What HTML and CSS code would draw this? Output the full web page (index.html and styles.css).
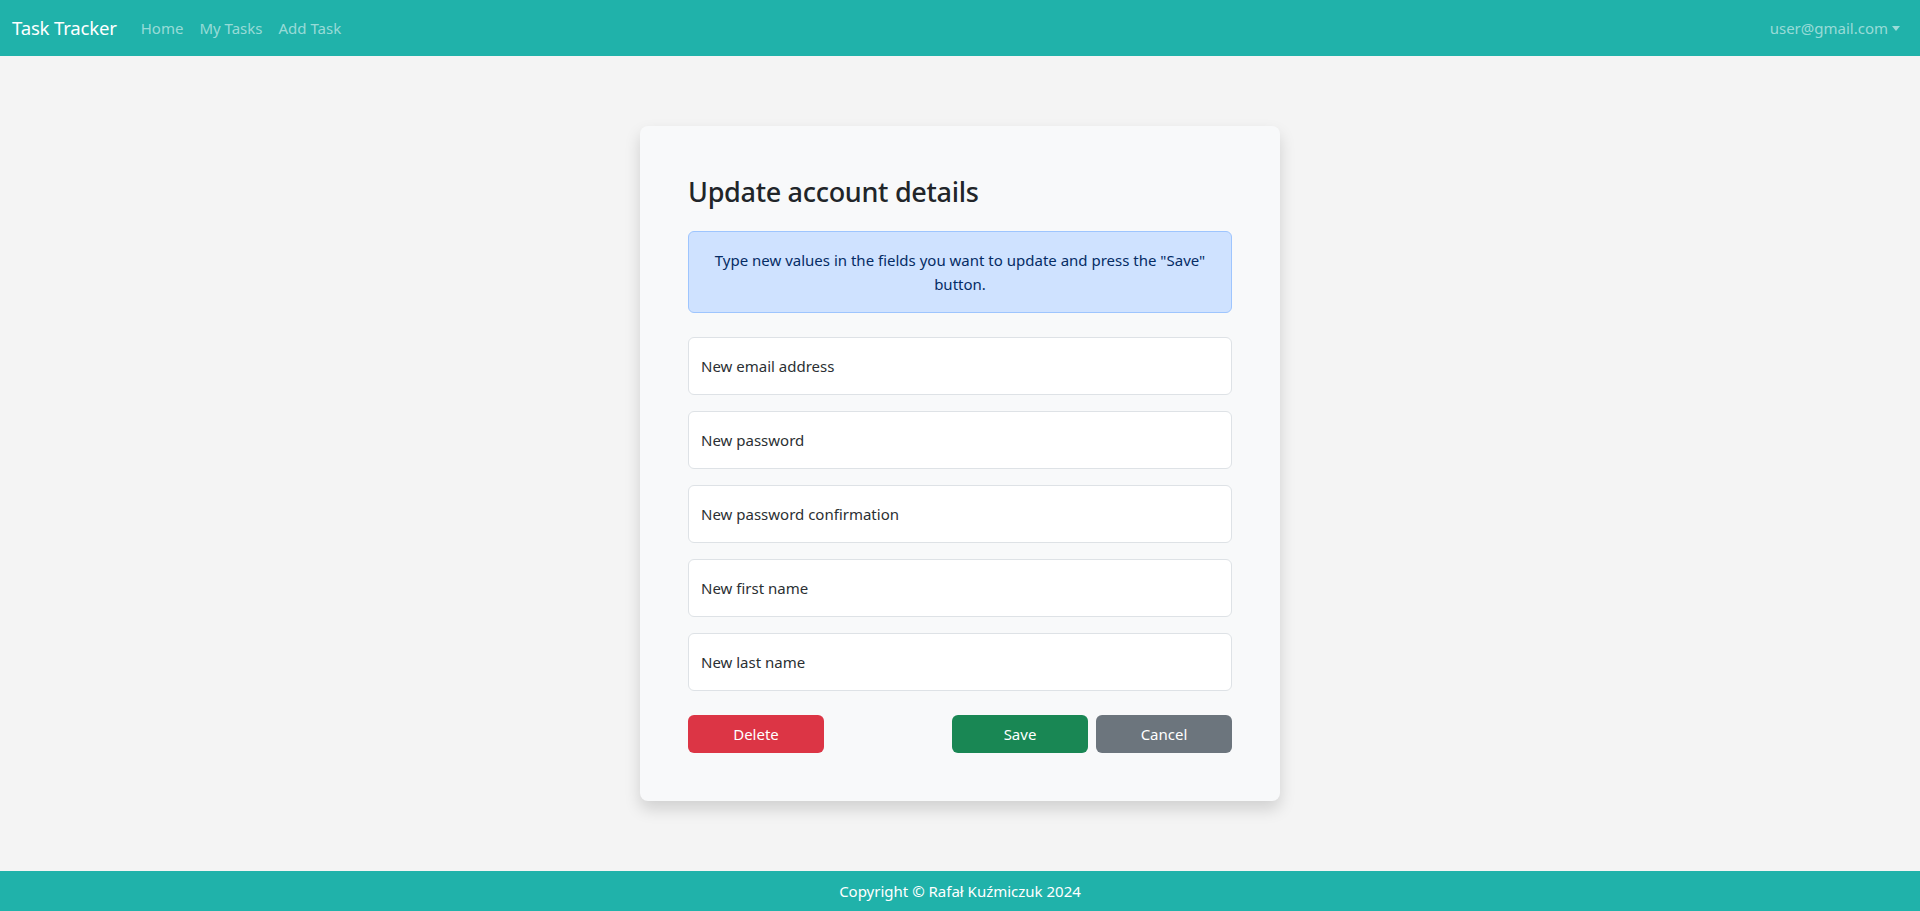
FILE: index.html
```html
<!DOCTYPE html>
<html lang="en">
<head>
<meta charset="utf-8">
<title>Task Tracker</title>
<link rel="stylesheet" href="styles.css">
</head>
<body>
<div class="page">
  <nav class="navbar">
    <div class="nav-left">
      <a class="brand" href="#">Task Tracker</a>
      <a class="nav-link" href="#">Home</a>
      <a class="nav-link" href="#">My Tasks</a>
      <a class="nav-link" href="#">Add Task</a>
    </div>
    <a class="nav-link user" href="#">user@gmail.com<span class="caret"></span></a>
  </nav>
  <main class="main">
    <div class="card">
      <h3 class="title">Update account details</h3>
      <div class="alert">Type new values in the fields you want to update and press the "Save" button.</div>
      <div class="field"><span class="label">New email address</span></div>
      <div class="field"><span class="label">New password</span></div>
      <div class="field"><span class="label">New password confirmation</span></div>
      <div class="field"><span class="label">New first name</span></div>
      <div class="field"><span class="label">New last name</span></div>
      <div class="actions">
        <button class="btn btn-danger">Delete</button>
        <div class="right-actions">
          <button class="btn btn-success">Save</button>
          <button class="btn btn-secondary">Cancel</button>
        </div>
      </div>
    </div>
  </main>
  <footer class="footer">Copyright © Rafał Kuźmiczuk 2024</footer>
</div>
</body>
</html>
```
FILE: styles.css
```css
* { box-sizing: border-box; }
html, body { margin: 0; padding: 0; }
body {
  font-family: "Noto Sans", "Open Sans", sans-serif;
  font-size: 16px;
  line-height: 1.5;
  color: #212529;
  background: #f4f4f4;
}
.page {
  min-height: 911px;
  display: flex;
  flex-direction: column;
}
.navbar {
  height: 56px;
  background: #20b2aa;
  display: flex;
  align-items: center;
  justify-content: space-between;
  padding: 0 12px;
}
.nav-left { display: flex; align-items: center; }
.brand {
  color: #fff;
  font-size: 18.6px;
  text-decoration: none;
  margin-right: 16px;
  padding: 5px 0;
  letter-spacing: -0.2px;
}
.nav-link {
  color: rgba(255,255,255,0.55);
  text-decoration: none;
  padding: 8px;
  font-size: 15px;
}
.user { display: flex; align-items: center; }
.caret {
  display: inline-block;
  margin-left: 4px;
  width: 0; height: 0;
  border-top: 5px solid rgba(255,255,255,0.55);
  border-left: 4.5px solid transparent;
  border-right: 4.5px solid transparent;
}
.main {
  flex: 1;
  display: flex;
  align-items: center;
  justify-content: center;
}
.card {
  width: 640px;
  background: #f8f9fa;
  border-radius: 8px;
  box-shadow: 0 8px 16px rgba(0,0,0,0.15);
  padding: 48px;
}
.title {
  margin: 2px 0 22px;
  font-size: 27px;
  font-weight: 500;
  line-height: 1.2;
  letter-spacing: -0.3px;
}
.alert {
  background: #cfe2ff;
  border: 1px solid #9ec5fe;
  color: #052c65;
  border-radius: 6px;
  padding: 16px;
  text-align: center;
  font-size: 15px;
  line-height: 24px;
  margin-bottom: 24px;
}
.field {
  height: 58px;
  background: #fff;
  border: 1px solid #dee2e6;
  border-radius: 6px;
  padding: 16px 12px;
  margin-bottom: 16px;
  display: flex;
  align-items: center;
}
.label { color: #2b2f33; font-size: 15px; line-height: 24px; }
.actions {
  margin-top: 24px;
  display: flex;
  justify-content: space-between;
}
.right-actions { display: flex; gap: 8px; }
.btn {
  width: 136px;
  height: 38px;
  border: 0;
  border-radius: 6px;
  color: #fff;
  font-family: inherit;
  font-size: 15px;
}
.btn-danger { background: #dc3545; }
.btn-success { background: #198754; }
.btn-secondary { background: #6c757d; }
.footer {
  height: 40px;
  background: #20b2aa;
  color: #fff;
  display: flex;
  align-items: center;
  justify-content: center;
  font-size: 15px;
}
```
